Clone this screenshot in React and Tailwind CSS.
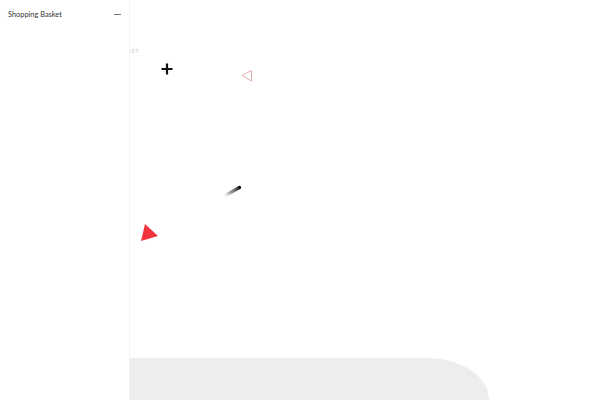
import React from 'react';

const Decorations = () => (
  <svg className="absolute inset-0" width="600" height="400" viewBox="0 0 600 400">
    <defs>
      <linearGradient id="streak" x1="226" y1="195" x2="240" y2="187" gradientUnits="userSpaceOnUse">
        <stop offset="0" stopColor="#000" stopOpacity="0.05" />
        <stop offset="0.6" stopColor="#555" stopOpacity="0.8" />
        <stop offset="1" stopColor="#000" />
      </linearGradient>
    </defs>
    <path d="M167 63.5v11M161.5 69h11" stroke="#111" strokeWidth="2.2" />
    <path d="M251.5 70.5v10.5L242 75.5z" fill="none" stroke="#e3a3a3" strokeWidth="0.9" />
    <path d="M226 195L239.5 187.5" stroke="url(#streak)" strokeWidth="3.2" strokeLinecap="round" />
    <path d="M145 224L158 236L141 241z" fill="#f2333d" />
  </svg>
);

export default function App() {
  return (
    <div className="relative w-[600px] h-[400px] overflow-hidden bg-white" style={{ fontFamily: 'Lato, "Open Sans", sans-serif' }}>
      <div className="absolute left-[116px] top-[46px] text-[6px] tracking-wide text-[#cfcfcf]">BASKET</div>
      <Decorations />
      <div className="absolute left-0 bottom-0 w-[489px] h-[42px] bg-[#ededed] rounded-tr-[76px_52px]" />
      <aside className="absolute left-0 top-0 bottom-0 w-[130px] bg-white border-r border-[#f3f3f3] z-10">
        <div className="flex items-center justify-between pl-[8px] pr-[8px] pt-[9px]">
          <span className="text-[7.4px] text-[#333] leading-[11px]">Shopping Basket</span>
          <span className="block w-[7px] h-px bg-[#777]" />
        </div>
      </aside>
    </div>
  );
}
